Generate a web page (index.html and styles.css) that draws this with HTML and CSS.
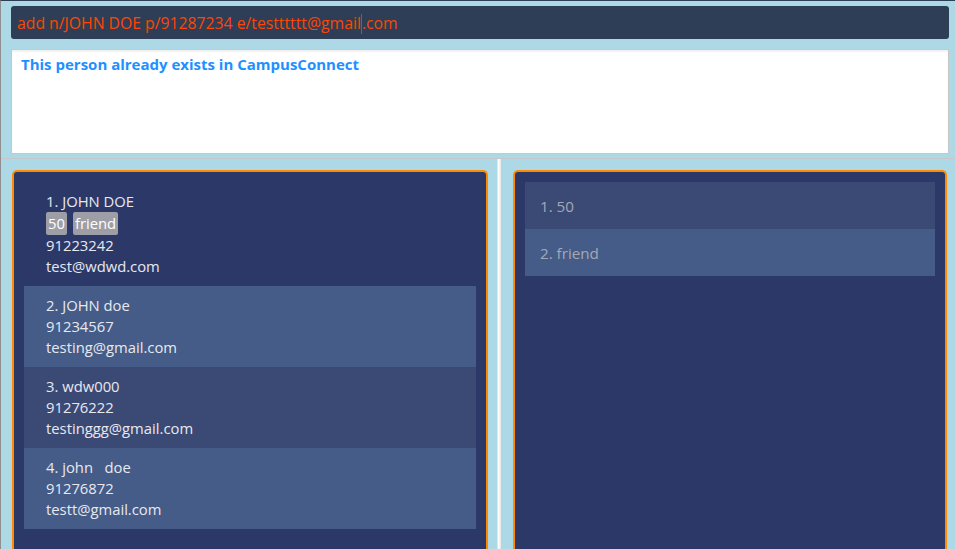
FILE: index.html
```html
<!DOCTYPE html>
<html>
<head>
<meta charset="utf-8">
<link rel="stylesheet" href="styles.css">
</head>
<body>
<div class="app">
  <div class="top">
    <div class="command"><span class="cmd-text">add n/JOHN DOE p/91287234 e/testttttt@gmail<span class="caret"></span>.com</span></div>
    <div class="result">This person already exists in CampusConnect</div>
  </div>
  <div class="split">
    <div class="panel left">
      <div class="card c0">
        <div class="line">1. JOHN DOE</div>
        <div class="tags"><span class="tag">50</span><span class="tag">friend</span></div>
        <div class="line">91223242</div>
        <div class="line">test@wdwd.com</div>
      </div>
      <div class="card c2">
        <div class="line">2. JOHN doe</div>
        <div class="line">91234567</div>
        <div class="line">testing@gmail.com</div>
      </div>
      <div class="card c1">
        <div class="line">3. wdw000</div>
        <div class="line">91276222</div>
        <div class="line">testinggg@gmail.com</div>
      </div>
      <div class="card c2">
        <div class="line">4. john&nbsp;&nbsp;&nbsp;doe</div>
        <div class="line">91276872</div>
        <div class="line">testt@gmail.com</div>
      </div>
    </div>
    <div class="divider"></div>
    <div class="panel right">
      <div class="item c1">1. 50</div>
      <div class="item c2">2. friend</div>
    </div>
  </div>
</div>
</body>
</html>
```
FILE: styles.css
```css
html, body {
  margin: 0;
  padding: 0;
  height: 100%;
  overflow: hidden;
}
body {
  background: #add8e6;
  font-family: "Open Sans", "Noto Sans", sans-serif;
}
.app {
  height: 549px;
  display: flex;
  flex-direction: column;
  border-left: 1px solid #8f8f8f;
  border-top: 1px solid #2d3e56;
  box-sizing: border-box;
}
.top {
  padding: 5px 6px 0 10px;
  display: flex;
  flex-direction: column;
  gap: 10px;
  border-bottom: 1px solid #c4c8cc;
  padding-bottom: 4px;
}
.command {
  height: 33px;
  background: #2d3e56;
  border-radius: 3px;
  display: flex;
  align-items: center;
  padding-left: 6px;
}
.cmd-text {
  color: #ff4500;
  font-size: 15.75px;
  position: relative;
}
.caret {
  display: inline-block;
  width: 1px;
  height: 20px;
  background: #b8452a;
  vertical-align: -5px;
}
.result {
  height: 105px;
  box-sizing: border-box;
  background: #fff;
  border: 1px solid #c8c8c8;
  box-shadow: inset 0 2px 2px rgba(0,0,0,0.06);
  color: #1e90ff;
  font-weight: bold;
  font-size: 15px;
  padding: 4px 9px;
}
.split {
  flex: 1;
  display: flex;
  padding: 11px 8px 0 11px;
  min-height: 0;
}
.panel {
  border: 2px solid #ff8c00;
  border-bottom: none;
  border-radius: 5px 5px 0 0;
  background: #2c3968;
  padding: 10px 10px 0 10px;
  box-sizing: border-box;
  display: flex;
  flex-direction: column;
}
.left {
  width: 476px;
}
.right {
  flex: 1;
}
.divider {
  width: 4px;
  margin: -11px 12px 0 9px;
  background: linear-gradient(to right, #d8d8d8, #ffffff 40%, #e4e4e4);
}
.card {
  padding: 9px 22px;
  color: #e8e8f0;
  font-size: 14.8px;
}
.line {
  line-height: 21px;
  white-space: pre;
}
.tags {
  display: flex;
  gap: 6px;
  height: 23px;
  align-items: center;
}
.tag {
  background: #9e9ea6;
  color: #fff;
  border-radius: 2px;
  padding: 0 2px;
  line-height: 23px;
  font-size: 14.8px;
}
.c0 { background: #2c3968; }
.c1 { background: #3b4a75; }
.c2 { background: #445c87; }
.item {
  height: 47px;
  display: flex;
  align-items: center;
  padding-left: 15px;
  color: #a4a8b4;
  font-size: 15.2px;
}
```
